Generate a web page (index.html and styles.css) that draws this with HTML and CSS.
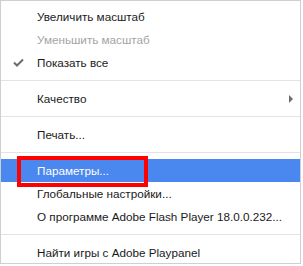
FILE: index.html
```html
<!DOCTYPE html>
<html lang="ru">
<head>
    <meta charset="UTF-8">
    <title>Flash Player menu</title>
    <link rel="stylesheet" href="styles.css">
</head>
<body>
<div class="menu">
    <div class="item">Увеличить масштаб</div>
    <div class="item disabled">Уменьшить масштаб</div>
    <div class="item checked">
        <svg class="check" width="11" height="9" viewBox="0 0 11 9"><path d="M1 4.5 L4 7.5 L10 1.5" fill="none" stroke="#6d6d6d" stroke-width="2"/></svg>
        Показать все
    </div>
    <div class="sep"></div>
    <div class="item sub">Качество<span class="arrow"></span></div>
    <div class="sep"></div>
    <div class="item">Печать...</div>
    <div class="sep"></div>
    <div class="item active">Параметры...<span class="mark"></span></div>
    <div class="item">Глобальные настройки...</div>
    <div class="item">О программе Adobe Flash Player 18.0.0.232...</div>
    <div class="sep"></div>
    <div class="item">Найти игры с Adobe Playpanel</div>
</div>
</body>
</html>
```

FILE: styles.css
```css
body {
    margin: 0;
    background: #fff;
    font-family: "Liberation Sans", Arial, sans-serif;
    font-size: 11.7px;
    color: #1a1a1a;
}
.menu {
    width: 299px;
    height: 258px;
    padding: 4px 0 0;
    border: 1px solid #cfcfcf;
    background: #fff;
}
.item {
    position: relative;
    height: 23px;
    line-height: 24px;
    padding-left: 36px;
    white-space: nowrap;
}
.disabled {
    color: #a3a3a3;
}
.check {
    position: absolute;
    left: 12px;
    top: 7px;
}
.arrow {
    position: absolute;
    right: 7px;
    top: 8px;
    width: 0;
    height: 0;
    border-top: 4px solid transparent;
    border-bottom: 4px solid transparent;
    border-left: 4px solid #6d6d6d;
}
.sep {
    height: 1px;
    margin: 6px 0 6px;
    background: #e3e3e3;
}
.active {
    background: #4a87ee;
    color: #fff;
}
.mark {
    position: absolute;
    left: 16px;
    top: -3px;
    width: 123px;
    height: 23px;
    border: 4px solid #f00;
}
```
